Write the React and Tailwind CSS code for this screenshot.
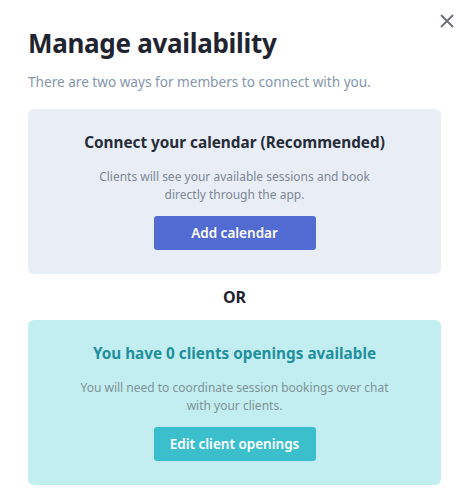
import React from "react";

export default function App() {
  return (
    <div className="relative w-[465px] h-[499px] bg-white pl-[28px] pr-[24px] pt-[25px]" style={{ fontFamily: "'Noto Sans', sans-serif" }}>
      <button className="absolute left-[440px] top-[14px] w-[14px] h-[14px] text-[#6b6f75]">
        <svg viewBox="0 0 14 14" width="14" height="14" fill="none" stroke="currentColor" strokeWidth="1.8" strokeLinecap="round">
          <path d="M1.5 1.5 L12.5 12.5 M12.5 1.5 L1.5 12.5" />
        </svg>
      </button>
      <h1 className="text-[26px] leading-[36px] font-bold text-[#1f2430] tracking-[-0.3px]">Manage availability</h1>
      <p className="mt-[12px] text-[13.6px] leading-[18px] text-[#8596ad]">There are two ways for members to connect with you.</p>
      <div className="mt-[18px] h-[165px] rounded-[6px] bg-[#e9edf5] flex flex-col items-center pt-[23px]">
        <h2 className="text-[15.3px] leading-[20px] font-bold text-[#262c38]">Connect your calendar (Recommended)</h2>
        <p className="mt-[16px] w-[290px] text-center text-[12px] leading-[18px] text-[#7d8898]">Clients will see your available sessions and book directly through the app.</p>
        <button className="mt-[12px] w-[162px] h-[34px] rounded-[3px] bg-[#526bd3] text-white text-[13.5px] font-semibold">Add calendar</button>
      </div>
      <div className="h-[46px] flex items-center justify-center text-[16px] font-bold text-[#1f2430]">OR</div>
      <div className="h-[165px] rounded-[6px] bg-[#c2eef1] flex flex-col items-center pt-[23px]">
        <h2 className="text-[15.3px] leading-[20px] font-bold text-[#1f909c]">You have 0 clients openings available</h2>
        <p className="mt-[16px] w-[330px] text-center text-[12px] leading-[18px] text-[#7f9396]">You will need to coordinate session bookings over chat with your clients.</p>
        <button className="mt-[12px] w-[162px] h-[34px] rounded-[3px] bg-[#3bbfcd] text-white text-[13.5px] font-semibold">Edit client openings</button>
      </div>
    </div>
  );
}
